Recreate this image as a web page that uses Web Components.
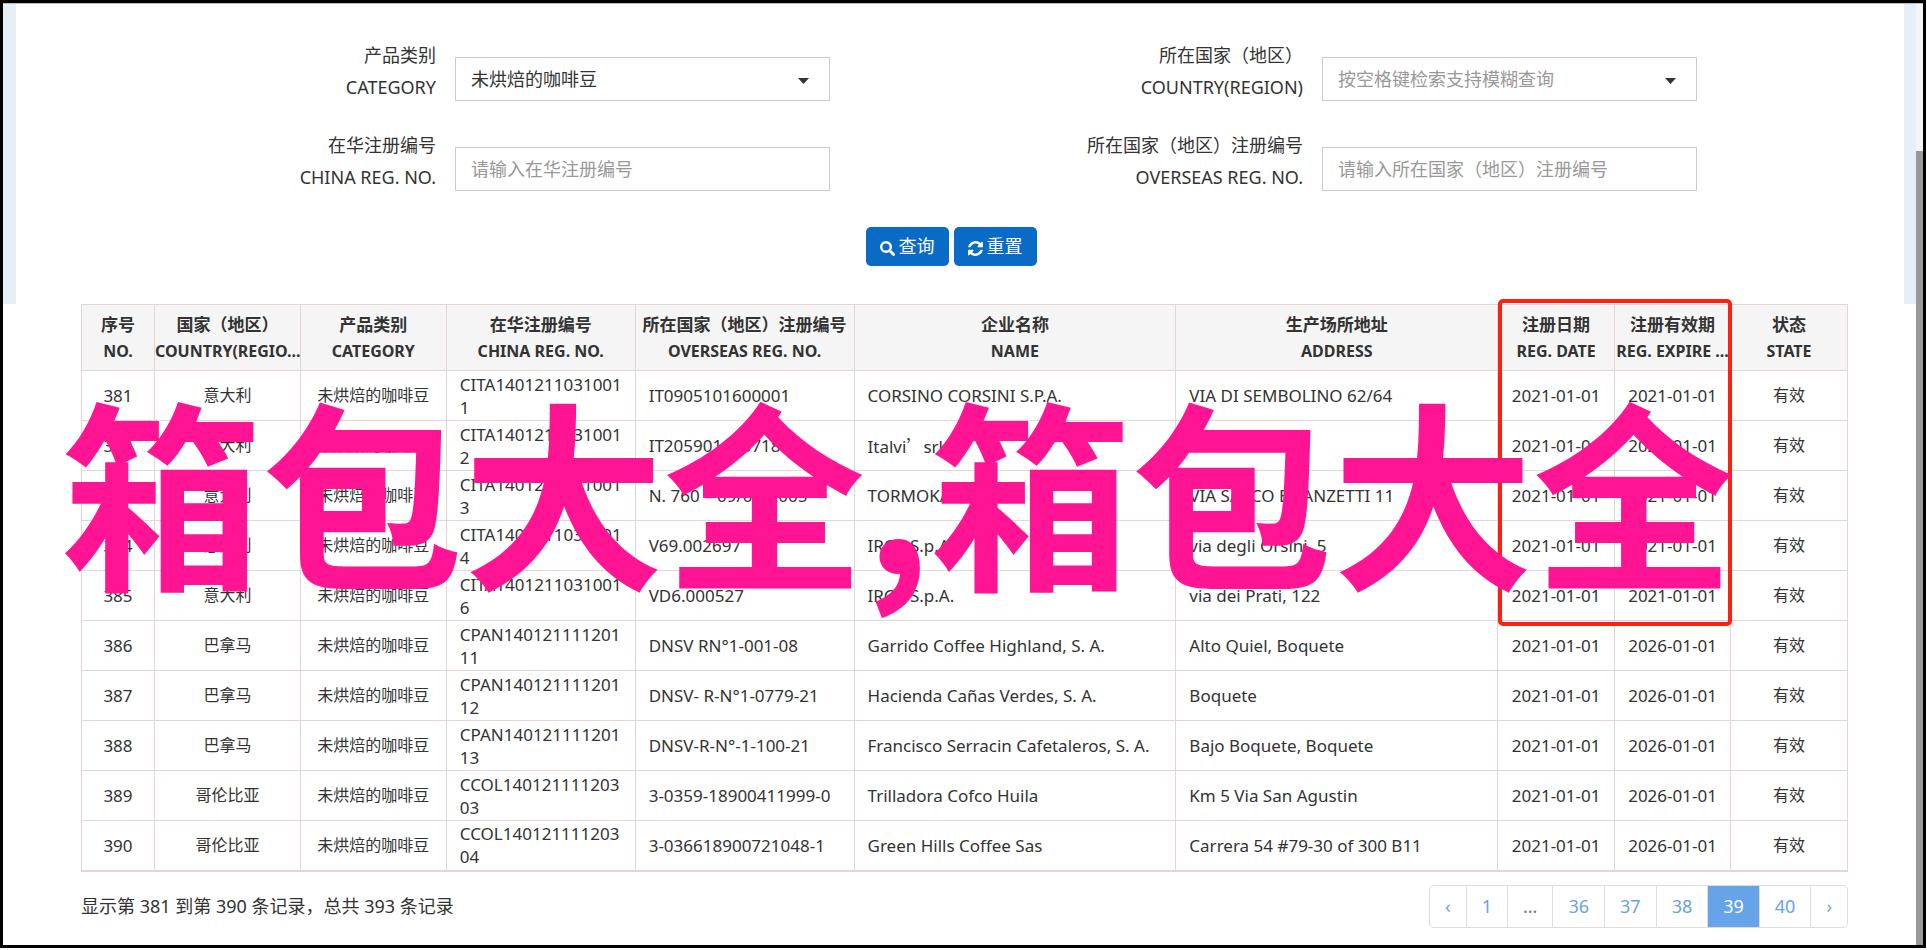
<!DOCTYPE html>
<html lang="zh-CN">
<head>
<meta charset="utf-8">
<title>进口食品境外生产企业注册信息</title>
<style>
body { margin: 0; background: #fff; color: #333; font: 16px/23px "Noto Sans", "Noto Sans CJK SC", sans-serif; }
</style>
</head>
<body>
<registry-page></registry-page>

<script>
const define = (name, html, setup) => customElements.define(name, class extends HTMLElement {
  connectedCallback() {
    if (this.shadowRoot) return;
    const template = document.createElement('template');
    template.innerHTML = html;
    this.attachShadow({ mode: 'open' }).append(template.content.cloneNode(true));
    if (setup) setup(this, this.shadowRoot);
  }
});

/* One labelled control of the search form: a text box, or a drop-down. */
define('search-field', `
<style>
  :host { display: grid; grid-template-columns: 371fr 375fr 121fr; min-width: 0; font-size: 18px; line-height: 32px; }
  label { padding-right: 19px; text-align: right; white-space: nowrap; display: flex; flex-direction: column; align-items: flex-end; }
  .box { position: relative; align-self: center; margin-top: 16px; }
  input, select { display: block; box-sizing: border-box; width: 100%; height: 44px; margin: 0; padding: 0 15px; border: 1px solid #ccc; border-radius: 0; background: #fff; color: #333; font: inherit; appearance: none; outline: none; }
  select.hint { color: #999; }
  input::placeholder { color: #999; opacity: 1; }
  svg { position: absolute; right: 21px; top: 21px; pointer-events: none; }
</style>
<label for="control"><span class="zh"></span><span class="en"></span></label>
<div class="box"></div>`, (host, root) => {
  root.querySelector('.zh').textContent = host.getAttribute('zh');
  root.querySelector('.en').textContent = host.getAttribute('en');
  const box = root.querySelector('.box');
  const text = host.getAttribute('text');
  if (host.hasAttribute('select')) {
    box.innerHTML = `<select id="control"><option></option></select>
      <svg width="11" height="6" viewBox="0 0 11 6" aria-hidden="true"><path d="M0 0H11L5.500 6Z" fill="#333"/></svg>`;
    box.querySelector('option').textContent = text;
    if (host.hasAttribute('hint')) box.querySelector('select').className = 'hint';
  } else {
    box.innerHTML = '<input id="control" type="text">';
    box.querySelector('input').placeholder = text;
  }
});

define('action-button', `
<style>
  :host { display: block; }
  button { display: flex; align-items: center; gap: 4px; height: 39px; padding: 0 14px; border: 0; border-radius: 5px; background: #0a6bc7; color: #fff; font: inherit; font-size: 18px; white-space: nowrap; }
  ::slotted(svg) { margin-top: 3px; }
</style>
<button type="button"><slot></slot></button>`);

define('search-form', `
<style>
  :host { display: block; padding: 35px 86px 38px 68px; }
  form { display: block; }
  .fields { display: grid; grid-template-columns: 1fr 1fr; row-gap: 26px; }
  .actions { display: flex; justify-content: center; gap: 5px; margin-top: 34px; }
</style>
<form>
  <div class="fields">
    <search-field zh="产品类别" en="CATEGORY" select text="未烘焙的咖啡豆"></search-field>
    <search-field zh="所在国家（地区）" en="COUNTRY(REGION)" select hint text="按空格键检索支持模糊查询"></search-field>
    <search-field zh="在华注册编号" en="CHINA REG. NO." text="请输入在华注册编号"></search-field>
    <search-field zh="所在国家（地区）注册编号" en="OVERSEAS REG. NO." text="请输入所在国家（地区）注册编号"></search-field>
  </div>
  <div class="actions">
    <action-button><svg width="15" height="15" viewBox="0 0 15 15" aria-hidden="true"><circle cx="6" cy="6" r="4.800" fill="none" stroke="#fff" stroke-width="2.400"/><path d="M9.600 9.600L13.600 13.600" stroke="#fff" stroke-width="2.800" stroke-linecap="round"/></svg>查询</action-button>
    <action-button><svg width="15" height="15" viewBox="0 0 1536 1536" aria-hidden="true"><path fill="#fff" d="M1511 928q0 5-1 7-64 268-268 434.500T764 1536q-146 0-282.500-55T238 1324l-129 129q-19 19-45 19t-45-19-19-45V960q0-26 19-45t45-19h448q26 0 45 19t19 45-19 45l-137 137q71 66 161 102t187 36q134 0 250-65t186-179q11-17 53-117 8-23 30-23h192q13 0 22.500 9.500t9.500 22.500zm25-800v448q0 26-19 45t-45 19h-448q-26 0-45-19t-19-45 19-45l138-138Q969 256 768 256q-134 0-250 65T332 500q-11 17-53 117-8 23-30 23H50q-13 0-22.500-9.500T18 608v-7q65-268 270-434.500T768 0q146 0 284 55.500T1297 212l130-129q19-19 45-19t45 19 19 45z"/></svg>重置</action-button>
  </div>
</form>`);

const columns = [
  ['序号', 'NO.', 73], ['国家（地区）', 'COUNTRY(REGIO...', 146], ['产品类别', 'CATEGORY', 146],
  ['在华注册编号', 'CHINA REG. NO.', 189], ['所在国家（地区）注册编号', 'OVERSEAS REG. NO.', 219],
  ['企业名称', 'NAME', 322], ['生产场所地址', 'ADDRESS', 322],
  ['注册日期', 'REG. DATE', 117], ['注册有效期', 'REG. EXPIRE ...', 116], ['状态', 'STATE', 117]
];
const rows = [
  ['意大利', 'CITA14012110310011', 'IT0905101600001', 'CORSINO CORSINI S.P.A.', 'VIA DI SEMBOLINO 62/64', '2021'],
  ['意大利', 'CITA14012110310012', 'IT205901100718', 'Italvi<span class="wide">’</span>srl', 'via Trebbia 2', '2021'],
  ['意大利', 'CITA14012110310013', 'N. 760 – 09/08/2005', 'TORMOKA', 'VIA SACCO E VANZETTI 11', '2021'],
  ['意大利', 'CITA14012110310014', 'V69.002697', 'IRCA S.p.A.', 'via degli Orsini, 5', '2021'],
  ['意大利', 'CITA14012110310016', 'VD6.000527', 'IRCA S.p.A.', 'via dei Prati, 122', '2021'],
  ['巴拿马', 'CPAN14012111120111', 'DNSV RN°1-001-08', 'Garrido Coffee Highland, S. A.', 'Alto Quiel, Boquete', '2026'],
  ['巴拿马', 'CPAN14012111120112', 'DNSV- R-N°1-0779-21', 'Hacienda Cañas Verdes, S. A.', 'Boquete', '2026'],
  ['巴拿马', 'CPAN14012111120113', 'DNSV-R-N°-1-100-21', 'Francisco Serracin Cafetaleros, S. A.', 'Bajo Boquete, Boquete', '2026'],
  ['哥伦比亚', 'CCOL14012111120303', '3-0359-18900411999-0', 'Trilladora Cofco Huila', 'Km 5 Via San Agustin', '2026'],
  ['哥伦比亚', 'CCOL14012111120304', '3-036618900721048-1', 'Green Hills Coffee Sas', 'Carrera 54 #79-30 of 300 B11', '2026']
];

define('company-table', `
<style>
  :host { display: block; }
  table { width: 100%; border-collapse: collapse; table-layout: fixed; border-bottom: 2px solid #e6d5d5; }
  th, td { border: 1px solid #e6d5d5; }
  th { height: 65px; padding: 0; background: #f5f5f5; line-height: 26px; }
  th span { display: block; white-space: nowrap; }
  .zh { font-size: 17px; }
  .en { font-size: 16px; }
  td { height: 50px; box-sizing: border-box; padding: 1px 12px 1px 13px; font-size: 17px; overflow-wrap: anywhere; }
  .c { text-align: center; padding: 1px 0; }
  .cjk { font-size: 16px; }
  .wide { font-family: "Noto Sans CJK SC", sans-serif; }
</style>
<table><colgroup></colgroup><thead><tr></tr></thead><tbody></tbody></table>`, (host, root) => {
  const total = columns.reduce((sum, column) => sum + column[2], 0);
  root.querySelector('colgroup').innerHTML = columns.map(c => `<col style="width:${c[2] / total * 100}%">`).join('');
  root.querySelector('thead tr').innerHTML = columns.map(c => `<th scope="col"><span class="zh">${c[0]}</span><span class="en">${c[1]}</span></th>`).join('');
  root.querySelector('tbody').innerHTML = rows.map(([country, china, overseas, name, address, expires], i) => `<tr>
    <td class="c">${381 + i}</td><td class="c cjk">${country}</td><td class="c cjk">未烘焙的咖啡豆</td><td>${china}</td><td>${overseas}</td>
    <td>${name}</td><td>${address}</td><td class="c">2021-01-01</td><td class="c">${expires}-01-01</td><td class="c cjk">有效</td></tr>`).join('');
});

/* Rounded frame laid over the two date columns, from the head to the fifth row. */
define('column-marker', `
<style>
  :host { position: absolute; box-sizing: border-box; top: -5px; right: 116px; width: 234px; height: 327px; border: 4px solid #ff2010; border-radius: 5px; pointer-events: none; }
</style>`);

define('page-nav', `
<style>
  :host { display: flex; justify-content: space-between; align-items: center; margin-top: 13px; font-size: 18px; }
  nav { display: flex; border: 1px solid #ddd; border-radius: 5px; overflow: hidden; }
  a, span { box-sizing: border-box; height: 41px; padding: 0 15px; border-left: 1px solid #ddd; line-height: 41px; color: #67a3e9; text-decoration: none; }
  a:first-child { border-left: 0; }
  .gap { color: #777; }
  a[aria-current] { background: #67a3e9; color: #fff; }
</style>
<slot></slot>
<nav aria-label="分页">
  <a href="#prev">‹</a><a href="#1">1</a><span class="gap">...</span><a href="#36">36</a><a href="#37">37</a><a href="#38">38</a><a href="#39" aria-current="page">39</a><a href="#40">40</a><a href="#next">›</a>
</nav>`);

define('watermark-text', `
<style>
  :host { position: absolute; z-index: 2; left: 58px; top: 335px; font: bold 201px/300px "Noto Sans CJK SC", sans-serif; color: #ff1493; white-space: nowrap; pointer-events: none; }
</style>
<slot></slot>`);

define('registry-page', `
<style>
  :host { display: block; position: relative; box-sizing: border-box; min-height: calc(100vh - 2px); margin: 0 1px 2px 0; border: 3px solid #000; overflow: hidden; }
  .edge { height: 1px; background: #bbb; }
  .top { border: solid #e6eef6; border-width: 0 12px 0 13px; margin-right: 7px; }
  .results { margin: 0 75px 0 78px; }
  .grid { position: relative; }
  .track { position: absolute; right: 0; top: 1px; bottom: 0; width: 7px; background: linear-gradient(#f4f4f4 147px, #999 147px); }
</style>
<div class="edge"></div>
<div class="top"><search-form></search-form></div>
<div class="results">
  <div class="grid"><company-table></company-table><column-marker></column-marker></div>
  <page-nav>显示第 381 到第 390 条记录，总共 393 条记录</page-nav>
</div>
<div class="track"></div>
<watermark-text>箱包大全,箱包大全</watermark-text>`);
</script>
</body>
</html>
